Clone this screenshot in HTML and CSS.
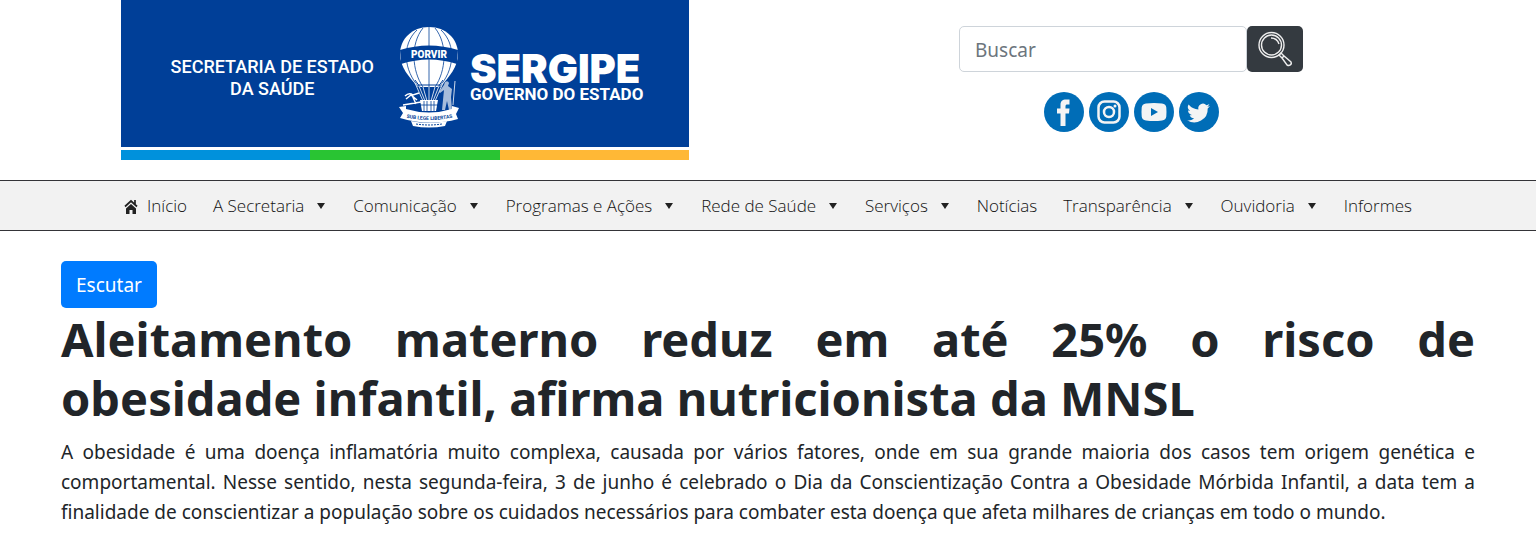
FILE: index.html
```html
<!DOCTYPE html>
<html lang="pt-BR">
<head>
<meta charset="utf-8">
<meta name="viewport" content="width=device-width, initial-scale=1">
<title>Secretaria de Estado da Saúde</title>
<link rel="stylesheet" href="styles.css">
</head>
<body>
<header class="header">
  <a class="brand" href="#">
    <span class="brand-panel">
      <span class="brand-dept">SECRETARIA DE ESTADO<br>DA SAÚDE</span>
      <svg class="brand-emblem" viewBox="0 0 62 102" aria-hidden="true">
        <g fill="#fff">
          <path d="M31 1C14 1 2 13 2 28c0 13 9 23 18 33h22c9-10 18-20 18-33C60 13 48 1 31 1Z"/>
        </g>
        <g fill="none" stroke="#003f98" stroke-width=".8">
          <path d="M31 1v60M25 2C12 18 14 45 25 61M37 2c13 16 11 43 0 59M19 4C3 19 6 45 21 61M43 4c16 15 13 41-2 57"/>
        </g>
        <path d="M22 61L17 54M40 61L45 54M20 59h22" stroke="#003f98" fill="none"/>
        <path d="M2 24Q31 15 60 24L59 38Q31 29 3 38Z" fill="#003f98"/>
        <text class="emblem-name" x="31" y="32" text-anchor="middle">PORVIR</text>
        <g fill="none" stroke="#fff" stroke-width=".8">
          <path d="M17 57l8 18M21 60l6 15M25 61l4 14M31 61v14M37 61l-4 14M41 60l-6 15M45 57l-8 18"/>
          <path d="M7 70q4-4 8-1l6-2M8 73l5-4 6 5M14 69l4 9M5 79l18-3" stroke-width="1.500"/>
          <path d="M57 55l-2 24"/>
        </g>
        <g fill="#fff">
          <path d="M22 74h18l-2 11H24Z"/>
          <path d="M47 56q3-2 4 1l-1 3 4 3-1 8 1 13h-3l-2-9-2 9h-3l2-20-4 3-1-1 5-7Z" opacity=".65"/>
          <path d="M1 81l7-1v3q23 7 46 0v-3l7 2-3 6 2 5Q31 101 2 92l3-5Z"/>
          <path d="M13 95q18 4 36 0l-2 5q-16 3-32 0Z"/>
        </g>
        <path d="M26 75v10M29 75v10M33 75v10M36 75v10M22 79h18" stroke="#003f98" stroke-width=".8" fill="none"/>
        <path id="motto-line" d="M5 91Q31 97 58 91" fill="none"/>
        <text class="emblem-motto"><textPath href="#motto-line" startOffset="50%" text-anchor="middle">SUB LEGE LIBERTAS</textPath></text>
        <path d="M18 98q13 2 26 0" stroke="#003f98" stroke-dasharray="2 1" fill="none"/>
      </svg>
      <span class="brand-state"><strong class="brand-name">SERGIPE</strong><span class="brand-gov">GOVERNO DO ESTADO</span></span>
    </span>
    <span class="brand-stripe"><i class="stripe-blue"></i><i class="stripe-green"></i><i class="stripe-yellow"></i></span>
  </a>
  <div class="tools">
    <form class="search" role="search">
      <input class="search-input" type="search" placeholder="Buscar" aria-label="Buscar">
      <button class="search-button" type="button" aria-label="Pesquisar">
        <svg class="search-icon" viewBox="0 0 36 36" fill="none" stroke="#eee" stroke-width="1.400" aria-hidden="true">
          <circle cx="14.500" cy="14" r="12.500"/><circle cx="14.500" cy="14" r="10"/>
          <path d="M14 7q6 0 8 6M22 24l2-2 3 3-2 2ZM25 27l2-2 7 6q1 2-1 3-1 1-3 0Z"/>
        </svg>
      </button>
    </form>
    <div class="social">
      <a class="social-link" href="#" aria-label="Facebook"><svg viewBox="0 0 40 40"><circle cx="20" cy="20" r="20" fill="#006db7"/><path d="M16.500 34V21.500H13v-5h3.500V13c0-4 2-5.500 5.500-5.500h3.500v5h-2c-1.500 0-2 .5-2 1.800v2.200h4l-.5 5h-3.500V34Z" fill="#f4f4f4"/></svg></a>
      <a class="social-link" href="#" aria-label="Instagram"><svg viewBox="0 0 40 40"><circle cx="20" cy="20" r="20" fill="#006db7"/><g fill="none" stroke="#f4f4f4" stroke-width="2.500"><rect x="9.500" y="9.500" width="21" height="21" rx="6"/><circle cx="20" cy="20" r="5"/></g><circle cx="26" cy="14" r="1.500" fill="#f4f4f4"/></svg></a>
      <a class="social-link" href="#" aria-label="YouTube"><svg viewBox="0 0 40 40"><circle cx="20" cy="20" r="20" fill="#006db7"/><path d="M12 11.500q8-1 16 0 4 .5 4.300 4 .4 4.500 0 9-.3 3.500-4.300 4-8 1-16 0-4-.5-4.300-4-.4-4.500 0-9 .3-3.500 4.300-4Z" fill="#f4f4f4"/><path d="M17 16l7 4-7 4Z" fill="#006db7"/></svg></a>
      <a class="social-link" href="#" aria-label="Twitter"><svg viewBox="0 0 40 40"><circle cx="20" cy="20" r="20" fill="#006db7"/><path transform="translate(8 9)" d="M23 4.900a9.400 9.400 0 0 1-2.700.7 4.700 4.700 0 0 0 2.100-2.600 9.400 9.400 0 0 1-3 1.200 4.700 4.700 0 0 0-8 4.300A13.400 13.400 0 0 1 1.600 3.600a4.700 4.700 0 0 0 1.500 6.300 4.700 4.700 0 0 1-2.100-.6c0 2.300 1.600 4.200 3.800 4.700a4.700 4.700 0 0 1-2.100.1 4.700 4.700 0 0 0 4.400 3.300 9.500 9.500 0 0 1-7 1.900 13.400 13.400 0 0 0 20.600-11.900A9.600 9.600 0 0 0 23 4.900Z" fill="#f4f4f4"/></svg></a>
    </div>
  </div>
</header>
<nav class="nav" aria-label="Principal">
  <ul class="menu">
    <li><a class="menu-link menu-home" href="#"><svg class="home-icon" viewBox="0 0 14 15" aria-hidden="true"><path d="M1 7.500L7 2l6 5.500M11 1v4" fill="none" stroke="#222" stroke-width="1.700"/><path d="M7 5l5 4.500V15H8.500v-4h-3v4H2V9.500Z"/></svg>Início</a></li>
    <li><a class="menu-link has-sub" href="#">A Secretaria</a></li>
    <li><a class="menu-link has-sub" href="#">Comunicação</a></li>
    <li><a class="menu-link has-sub" href="#">Programas e Ações</a></li>
    <li><a class="menu-link has-sub" href="#">Rede de Saúde</a></li>
    <li><a class="menu-link has-sub" href="#">Serviços</a></li>
    <li><a class="menu-link" href="#">Notícias</a></li>
    <li><a class="menu-link has-sub" href="#">Transparência</a></li>
    <li><a class="menu-link has-sub" href="#">Ouvidoria</a></li>
    <li><a class="menu-link" href="#">Informes</a></li>
  </ul>
</nav>
<main class="article">
  <button class="listen" type="button">Escutar</button>
  <h1 class="title">Aleitamento materno reduz em até 25% o risco de obesidade infantil, afirma nutricionista da MNSL</h1>
  <p class="lead">A obesidade é uma doença inflamatória muito complexa, causada por vários fatores, onde em sua grande maioria dos casos tem origem genética e comportamental. Nesse sentido, nesta segunda-feira, 3 de junho é celebrado o Dia da Conscientização Contra a Obesidade Mórbida Infantil, a data tem a finalidade de conscientizar a população sobre os cuidados necessários para combater esta doença que afeta milhares de crianças em todo o mundo.</p>
</main>
</body>
</html>
```
FILE: styles.css
```css
* { box-sizing: border-box; }
body {
  margin: 0;
  background: #fff;
  color: #212529;
  font-family: "Segoe UI", "Noto Sans", sans-serif;
  font-size: 19px;
  line-height: 30px;
}
a { color: inherit; text-decoration: none; }
.header {
  display: grid;
  grid-template-columns: 1fr 1fr;
  gap: 158px;
  max-width: 1294px;
  margin: 0 auto;
  padding-bottom: 20px;
}
.brand { display: block; color: #fff; }
.brand-panel {
  display: flex;
  justify-content: center;
  align-items: center;
  background: #003f98;
  padding: 26px 0 19px 4px;
}
.brand-dept {
  font: 500 18px/22px Roboto, sans-serif;
  text-align: center;
  padding-top: 2px;
  margin-right: 24px;
}
.brand-emblem { width: 62px; height: 102px; margin-right: 10px; }
.emblem-name { font: 900 10px Roboto, sans-serif; fill: #fff; }
.emblem-motto { font: 700 5px Roboto, sans-serif; fill: #003f98; }
.brand-state { display: flex; flex-direction: column; }
.brand-name { font: 900 40px/34px Inter, sans-serif; }
.brand-gov { font: 700 17px/16px Roboto, sans-serif; }
.brand-stripe { display: flex; margin-top: 3px; }
.brand-stripe i { flex: 1; height: 10px; }
.stripe-blue { background: #0091dc; }
.stripe-green { background: #29c433; }
.stripe-yellow { background: #ffb836; }
.tools { display: flex; flex-direction: column; align-items: center; gap: 20px; padding-top: 26px; }
.search { display: flex; width: 344px; max-width: 100%; }
.search-input {
  flex: 1;
  min-width: 0;
  height: 46px;
  padding: 2px 15px 0;
  border: 1px solid #ced4da;
  border-radius: 5px;
  background: #fff;
  font: inherit;
}
.search-input::placeholder { color: #6c757d; opacity: 1; }
.search-button {
  display: flex;
  align-items: center;
  justify-content: center;
  width: 56px;
  padding: 0;
  border: 0;
  border-radius: 5px;
  background: #343a40;
}
.search-icon { width: 36px; height: 36px; }
.social { display: flex; gap: 5px; }
.social-link { display: flex; width: 40px; height: 40px; }
.nav {
  background: #f2f2f2;
  border-top: 1px solid #343438;
  border-bottom: 1px solid #343438;
}
.menu {
  display: flex;
  justify-content: space-between;
  max-width: 1288px;
  margin: 0 auto;
  padding: 10px 0 9px;
  list-style: none;
}
.menu-link {
  display: flex;
  align-items: center;
  font-family: "Segoe UI", "Open Sans", sans-serif;
  font-size: 17px;
  font-weight: 300;
  color: #111;
  white-space: nowrap;
}
.home-icon { width: 14px; height: 15px; margin-right: 9px; fill: #222; }
.has-sub::after {
  content: "";
  margin: 0 2px 0 13px;
  border: 4px solid transparent;
  border-top: 6px solid #222;
  border-bottom: 0;
}
.article { padding: 30px 61px 16px; }
.listen {
  display: block;
  height: 47px;
  padding: 0 15px;
  border: 0;
  border-radius: 5px;
  background: #007bff;
  color: #fff;
  font: inherit;
}
.title { margin: 2px 0 9px; font-size: 47px; line-height: 59px; text-align: justify; }
.lead { margin: 0; text-align: justify; }
```
